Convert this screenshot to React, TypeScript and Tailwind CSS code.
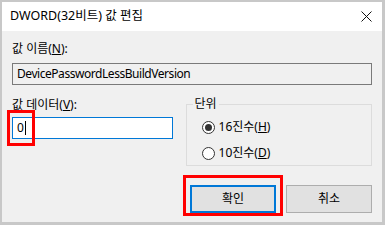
import React from "react";

const font = { fontFamily: '"Noto Sans", "Noto Sans CJK KR", sans-serif' };

function Radio({ checked, label, mn }: { checked?: boolean; label: string; mn: string }) {
  return (
    <div className="flex items-center h-[26px]">
      <div className="w-[13px] h-[13px] rounded-full border border-[#333333] bg-white flex items-center justify-center">
        {checked && <div className="w-[7px] h-[7px] rounded-full bg-[#333333]" />}
      </div>
      <span className="ml-[4px] text-[12px] text-black">
        {label}(<span className="underline">{mn}</span>)
      </span>
    </div>
  );
}

export default function App() {
  return (
    <div
      className="w-[385px] h-[225px] bg-[#c8c8c8] border-l-2 border-t-2 border-r-[3px] border-b-[3px] border-[#c8c8c8] flex flex-col"
      style={font}
    >
      <div className="h-[29px] bg-white flex items-center justify-between pl-[8px] pr-[9px]">
        <span className="text-[12.5px] text-black">DWORD(32비트) 값 편집</span>
        <svg width="11" height="11" viewBox="0 0 11 11" className="mr-[1px]">
          <path d="M0.5 0.5 L10.5 10.5 M10.5 0.5 L0.5 10.5" stroke="#111" strokeWidth="1" />
        </svg>
      </div>
      <div className="relative flex-1 bg-[#f0f0f0] px-[10px] pt-[10px] flex flex-col">
        <div className="text-[12px] leading-[16px] text-black">
          값 이름(<span className="underline">N</span>):
        </div>
        <div className="mt-[6px] h-[22px] border border-[#7a7a7a] bg-[#f0f0f0] flex items-center pl-[4px] text-[12px] tracking-[-0.45px] text-black">
          DevicePasswordLessBuildVersion
        </div>
        <div className="flex mt-[12px]">
          <div className="w-[161px] flex flex-col">
            <div className="text-[12px] leading-[16px] text-black">
              값 데이터(<span className="underline">V</span>):
            </div>
            <div className="mt-[4px] h-[22px] border border-[#0078d7] bg-white flex items-center pl-[4px] text-[12px] text-black">
              0<span className="ml-[1px] w-px h-[14px] bg-black" />
            </div>
          </div>
          <fieldset className="ml-[13px] w-[187px] h-[70px] -mt-[1px] border border-[#dcdcdc]">
            <legend className="ml-[6px] px-[2px] text-[12px] leading-[16px] text-black">단위</legend>
            <div className="pl-[15px] pt-[2px]">
              <Radio checked label="16진수" mn="H" />
              <Radio label="10진수" mn="D" />
            </div>
          </fieldset>
        </div>
        <div className="flex justify-end gap-[10px] mt-[19px]">
          <button className="w-[86px] h-[28px] border-2 border-[#0078d7] bg-[#e1e1e1] text-[12px] text-black">
            확인
          </button>
          <button className="w-[86px] h-[28px] border border-[#adadad] bg-[#e1e1e1] text-[12px] text-black">
            취소
          </button>
        </div>
        <div className="absolute left-[5px] top-[79px] w-[28px] h-[36px] border-[3px] border-[#ff0000]" />
        <div className="absolute left-[181px] top-[144px] w-[100px] h-[41px] border-[3px] border-[#ff0000]" />
      </div>
    </div>
  );
}
